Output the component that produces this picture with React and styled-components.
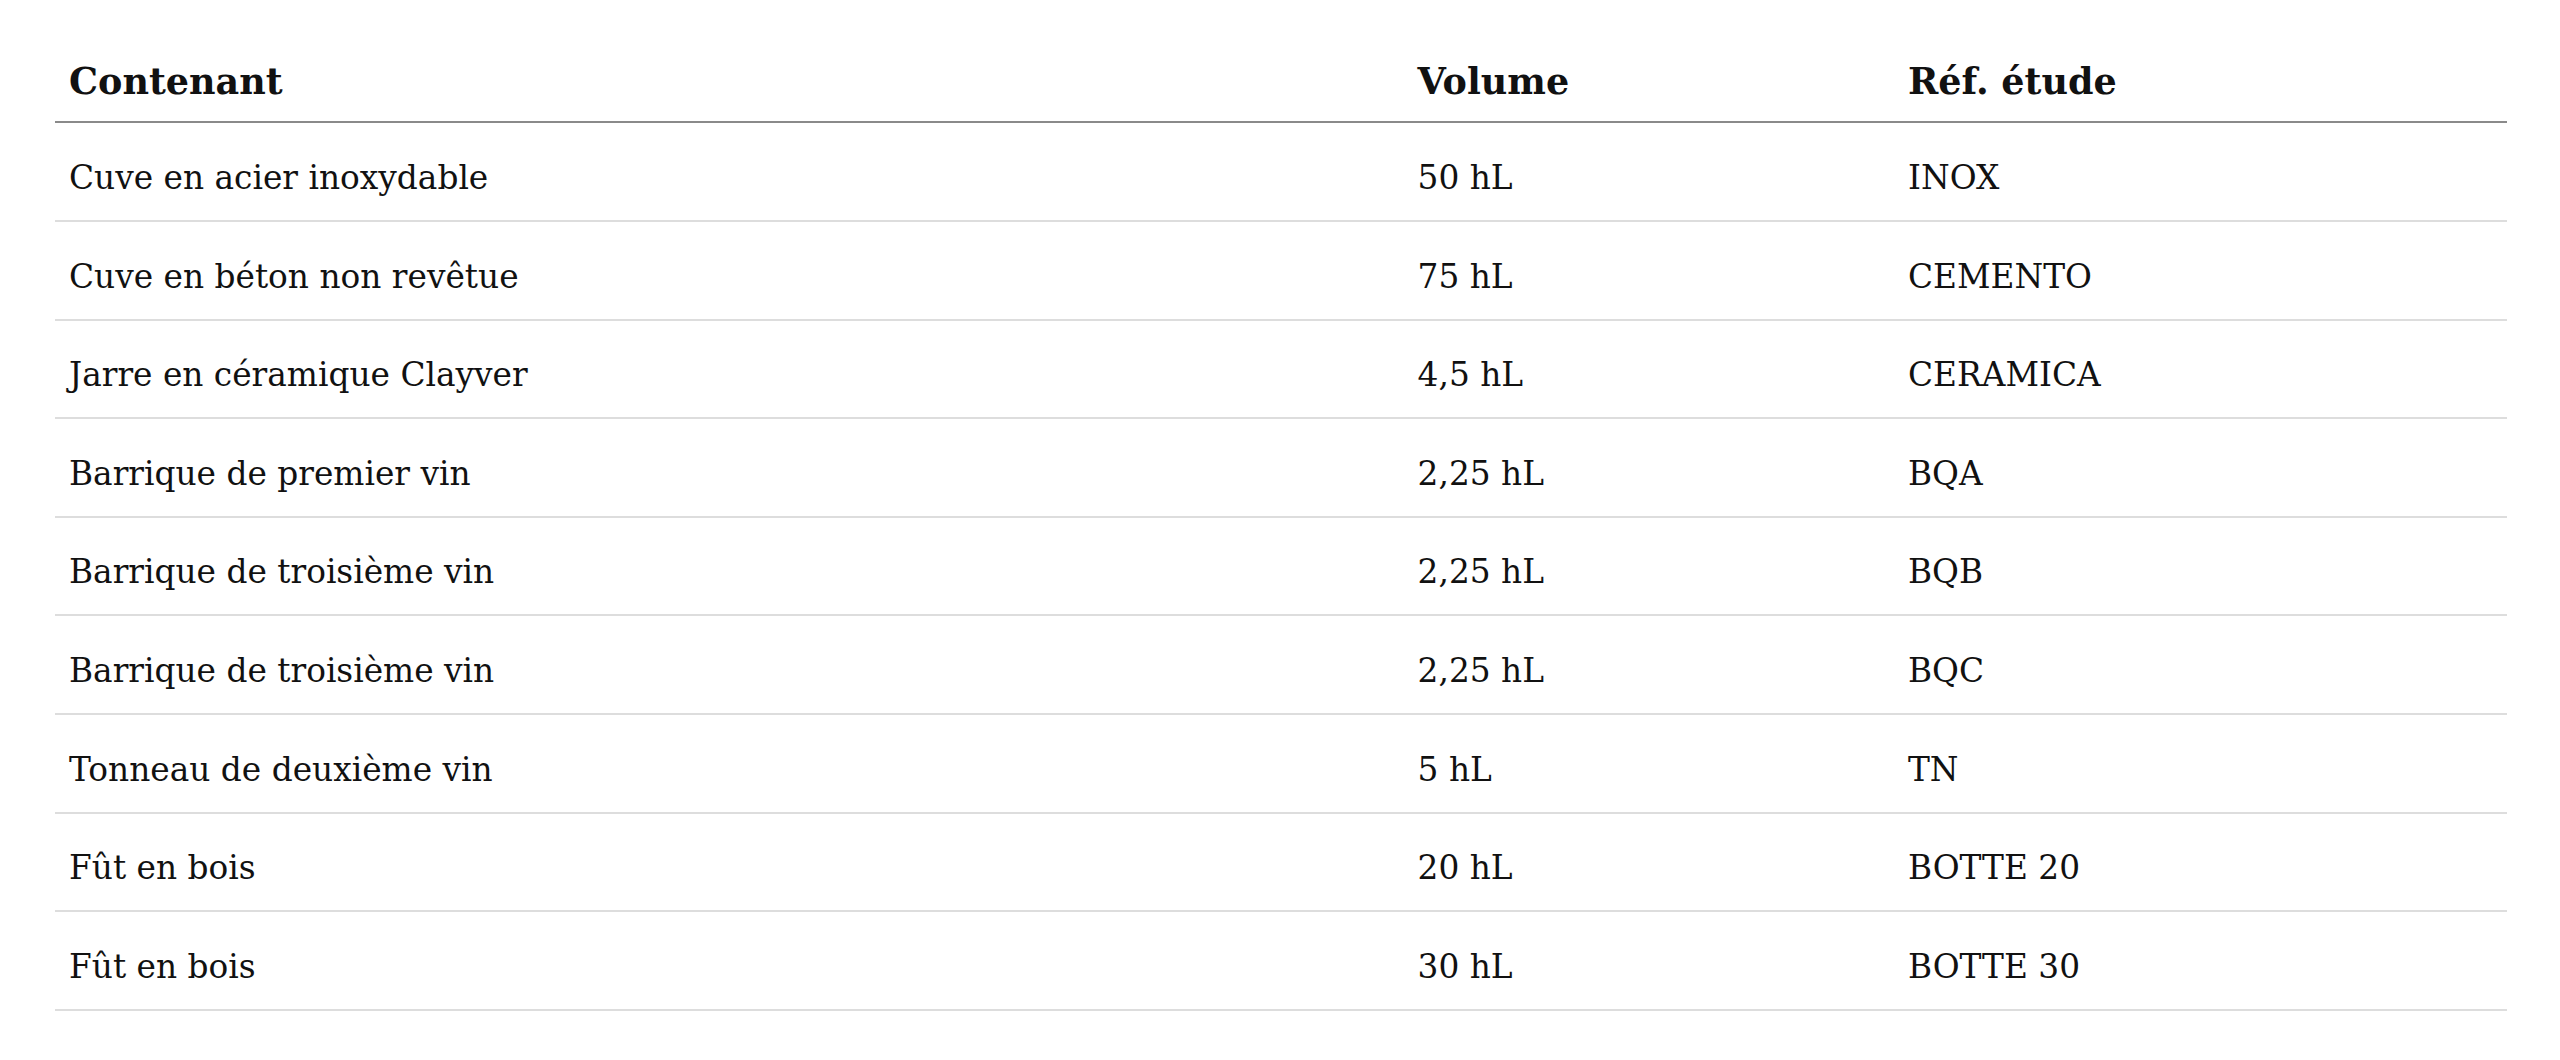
import React from "react";
import styled, { createGlobalStyle } from "styled-components";

const GlobalStyle = createGlobalStyle`
  html, body {
    margin: 0;
    padding: 0;
    background: #ffffff;
  }
  body {
    font-family: "DejaVu Serif", "Liberation Serif", serif;
    color: #111111;
  }
`;

const Page = styled.main`
  padding: 50.5px 53px 40px 55px;
`;

const Table = styled.table`
  width: 100%;
  table-layout: fixed;
  border-collapse: separate;
  border-spacing: 0;
  font-family: "DejaVu Serif", "Liberation Serif", serif;
  color: #111111;
`;

const Col = styled.col`
  width: ${(p) => p.$w};
`;

const HeadCell = styled.th`
  text-align: left;
  font-weight: 700;
  font-size: 36.5px;
  line-height: 42px;
  padding: 10.5px 14px 17.5px 14px;
  border-bottom: 2px solid #8a8a8a;
  white-space: nowrap;
`;

const Cell = styled.td`
  text-align: left;
  font-weight: 400;
  font-size: 32.8px;
  line-height: 38px;
  padding: 35.5px 14px 23.1px 14px;
  border-bottom: 2px solid #dddddd;
  white-space: nowrap;
`;

const FirstRow = styled.tr`
  & > td {
    padding-top: 36.5px;
  }
`;

const Row = styled.tr``;

const rows = [
  ["Cuve en acier inoxydable", "50 hL", "INOX"],
  ["Cuve en béton non revêtue", "75 hL", "CEMENTO"],
  ["Jarre en céramique Clayver", "4,5 hL", "CERAMICA"],
  ["Barrique de premier vin", "2,25 hL", "BQA"],
  ["Barrique de troisième vin", "2,25 hL", "BQB"],
  ["Barrique de troisième vin", "2,25 hL", "BQC"],
  ["Tonneau de deuxième vin", "5 hL", "TN"],
  ["Fût en bois", "20 hL", "BOTTE 20"],
  ["Fût en bois", "30 hL", "BOTTE 30"],
];

export default function App() {
  return (
    <>
      <GlobalStyle />
      <Page>
        <Table>
          <colgroup>
            <Col $w="55%" />
            <Col $w="20%" />
            <Col $w="25%" />
          </colgroup>
          <thead>
            <tr>
              <HeadCell>Contenant</HeadCell>
              <HeadCell>Volume</HeadCell>
              <HeadCell>Réf. étude</HeadCell>
            </tr>
          </thead>
          <tbody>
            {rows.map((r, i) => {
              const R = i === 0 ? FirstRow : Row;
              return (
                <R key={i}>
                  <Cell>{r[0]}</Cell>
                  <Cell>{r[1]}</Cell>
                  <Cell>{r[2]}</Cell>
                </R>
              );
            })}
          </tbody>
        </Table>
      </Page>
    </>
  );
}
